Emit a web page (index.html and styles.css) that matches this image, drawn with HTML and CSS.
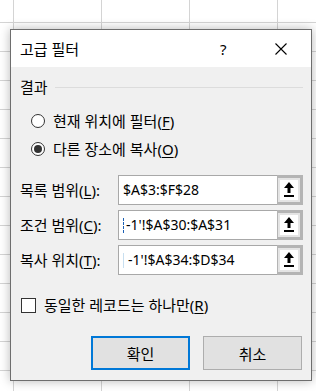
FILE: index.html
```html
<!DOCTYPE html>
<html lang="ko">
<head>
<meta charset="UTF-8" />
<meta name="viewport" content="width=device-width, initial-scale=1" />
<title>고급 필터</title>
<link rel="stylesheet" href="styles.css">
</head>
<body>

<div class="dialog">
  <div class="titlebar">
    <span class="title">고급 필터</span>
    <span class="help">?</span>
    <svg class="close" width="12" height="12" viewBox="0 0 12 12"><path d="M0.5 0.5 L11.5 11.5 M11.5 0.5 L0.5 11.5" stroke="#000" stroke-width="1.1" fill="none"/></svg>
  </div>

  <div class="content">
    <div class="group-head">
      <span>결과</span>
      <span class="rule"></span>
    </div>

    <label class="radio-row"><span class="radio"></span>현재 위치에 필터(<u>F</u>)</label>
    <label class="radio-row"><span class="radio checked"></span>다른 장소에 복사(<u>O</u>)</label>

    <div class="fields">
      <div class="field">
        <span class="field-label">목록 범위(<u>L</u>):</span>
        <div class="range">
          <span class="range-text">$A$3:$F$28</span>
          <span class="pick"><svg width="12" height="16" viewBox="0 0 12 16"><path d="M6 0 L11 6 L7.5 6 L7.5 11 L4.5 11 L4.5 6 L1 6 Z" fill="#000"/><rect x="1" y="13" width="10" height="2" fill="#000"/></svg></span>
        </div>
      </div>
      <div class="field">
        <span class="field-label">조건 범위(<u>C</u>):</span>
        <div class="range">
          <span class="range-text"><span class="cut"></span>-1'!$A$30:$A$31</span>
          <span class="pick"><svg width="12" height="16" viewBox="0 0 12 16"><path d="M6 0 L11 6 L7.5 6 L7.5 11 L4.5 11 L4.5 6 L1 6 Z" fill="#000"/><rect x="1" y="13" width="10" height="2" fill="#000"/></svg></span>
        </div>
      </div>
      <div class="field">
        <span class="field-label">복사 위치(<u>T</u>):</span>
        <div class="range">
          <span class="range-text"><span class="cut faint"></span>-1'!$A$34:$D$34</span>
          <span class="pick"><svg width="12" height="16" viewBox="0 0 12 16"><path d="M6 0 L11 6 L7.5 6 L7.5 11 L4.5 11 L4.5 6 L1 6 Z" fill="#000"/><rect x="1" y="13" width="10" height="2" fill="#000"/></svg></span>
        </div>
      </div>
    </div>

    <label class="check-row"><span class="checkbox"></span>동일한 레코드는 하나만(<u>R</u>)</label>

    <div class="buttons">
      <button class="btn default">확인</button>
      <button class="btn">취소</button>
    </div>
  </div>
</div>

</body>
</html>
```

FILE: styles.css
```css
html, body {
  height: 100%;
}
body {
  margin: 0;
  font-family: "Noto Sans", "Noto Sans CJK KR", sans-serif;
  font-size: 15px;
  color: #000;
  background-color: #fff;
  background-image:
    linear-gradient(to right, #d4d4d4 1px, transparent 1px),
    linear-gradient(to bottom, #d4d4d4 1px, transparent 1px);
  background-size: 88px 29px;
  background-position: 13px 22px;
  overflow: hidden;
}
u {
  text-decoration: underline;
  text-underline-offset: 2px;
}

/* dialog window sits on the sheet */
.dialog {
  position: absolute;
  left: 10px;
  top: 29px;
  width: 300px;
  border: 1px solid #6e6e6e;
  background: #f0f0f0;
  box-shadow: 0 0 10px rgba(0, 0, 0, 0.28);
}
.titlebar {
  display: flex;
  align-items: center;
  height: 37px;
  background: #fff;
  padding-left: 9px;
}
.title {
  flex: 1;
  line-height: 20px;
}
.help {
  width: 10px;
  margin-right: 45px;
  line-height: 20px;
}
.close {
  margin-right: 24px;
}

.content {
  padding: 10px 8px 10px 9px;
}
.group-head {
  display: flex;
  align-items: center;
  height: 20px;
  line-height: 20px;
}
.rule {
  flex: 1;
  height: 1px;
  background: #dcdcdc;
  margin-left: 7px;
}

.radio-row {
  display: flex;
  align-items: center;
  height: 28px;
  line-height: 20px;
  padding-left: 11px;
}
.radio-row:first-of-type {
  margin-top: 10px;
}
.radio {
  width: 12px;
  height: 12px;
  border: 1px solid #333;
  border-radius: 50%;
  background: #fff;
  margin-right: 8px;
  display: flex;
  align-items: center;
  justify-content: center;
}
.radio.checked::after {
  content: "";
  width: 8px;
  height: 8px;
  border-radius: 50%;
  background: #333;
}

.fields {
  display: flex;
  flex-direction: column;
  gap: 5px;
  margin-top: 12px;
}
.field {
  display: flex;
  align-items: center;
  height: 30px;
  line-height: 20px;
}
.field-label {
  width: 98px;
}
.range {
  flex: 1;
  display: flex;
  align-items: center;
  height: 30px;
  box-sizing: border-box;
  border: 1px solid #a8a8a8;
  background: #fff;
}
.range-text {
  flex: 1;
  display: flex;
  align-items: center;
  padding-left: 4px;
  font-size: 14px;
  line-height: 20px;
  white-space: nowrap;
  overflow: hidden;
}
.cut {
  width: 0;
  height: 15px;
  border-left: 1px dashed #1a5fb4;
  margin-right: 2px;
}
.cut.faint {
  border-left: 1px solid #c8dff0;
  margin-right: 4px;
}
.pick {
  align-self: stretch;
  width: 22px;
  margin: -1px -1px -1px 0;
  border: 3px solid #b4b4b4;
  border-left: 1px solid #b4b4b4;
  background: #fff;
  box-shadow: inset 0 0 0 2px #e4e4e4;
  display: flex;
  align-items: center;
  justify-content: center;
}

.check-row {
  display: flex;
  align-items: center;
  height: 20px;
  line-height: 20px;
  margin-top: 20px;
}
.checkbox {
  width: 13px;
  height: 13px;
  border: 1px solid #333;
  background: #fff;
  margin-right: 8px;
  margin-left: 1px;
}

.buttons {
  display: flex;
  justify-content: flex-end;
  gap: 13px;
  margin-top: 21px;
  padding-right: 1px;
}
.btn {
  width: 99px;
  height: 34px;
  font-family: inherit;
  font-size: 15px;
  color: #000;
  background: #e1e1e1;
  border: 1px solid #adadad;
  padding: 0;
}
.btn.default {
  border: 2px solid #0078d7;
}
```
